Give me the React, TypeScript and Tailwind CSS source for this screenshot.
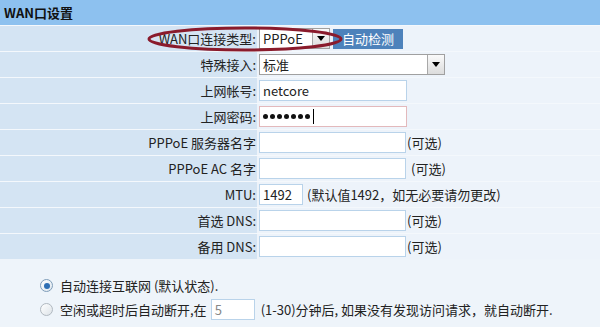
import React from "react";

const font = { fontFamily: '"Noto Sans CJK SC", "Noto Sans", sans-serif' };

function Arrow() {
  return (
    <span className="flex h-full w-[17px] items-center justify-center border-l border-[#a8a8a8] bg-gradient-to-b from-[#fafafa] to-[#dcdcdc]">
      <span className="h-0 w-0 border-x-[4px] border-t-[5px] border-x-transparent border-t-black" />
    </span>
  );
}

function Row({ label, children }: { label: string; children?: React.ReactNode }) {
  return (
    <div className="flex h-[26px] border-t border-[#f4f8fc]">
      <div className="flex w-[257px] items-center justify-end bg-[#d4e4f3] pr-[1px] text-[13px] text-[#222]">
        {label}
      </div>
      <div className="flex flex-1 items-center border-l border-[#eef3f9] bg-[#edf3fa] pl-[1px] text-[13px] text-[#222]">
        {children}
      </div>
    </div>
  );
}

function Input({ w, value, pink }: { w: string; value?: React.ReactNode; pink?: boolean }) {
  return (
    <div
      className={`flex h-[21px] items-center bg-white px-[3px] text-[13px] ${w} border ${
        pink ? "border-[#e3b9bc]" : "border-[#b9d3ea]"
      }`}
    >
      {value}
    </div>
  );
}

export default function App() {
  const dots = [0, 1, 2, 3, 4, 5, 6];
  return (
    <div className="relative h-[327px] w-[600px] overflow-hidden bg-[#eef4fa]" style={font}>
      <div className="flex h-[25px] items-center bg-[#8dc1ef] pl-[4px] text-[13px] font-bold text-[#111]">
        WAN口设置
      </div>

      <Row label="WAN口连接类型:">
        <div className="flex h-[21px] w-[71px] items-center justify-between border border-[#a0a0a0] bg-white pl-[3px]">
          <span>PPPoE</span>
          <Arrow />
        </div>
        <button className="ml-[3px] h-[20px] w-[70px] bg-[#4d82bb] text-[13px] text-white">自动检测</button>
      </Row>
      <Row label="特殊接入:">
        <div className="flex h-[21px] w-[186px] items-center justify-between border border-[#a0a0a0] bg-white pl-[3px]">
          <span>标准</span>
          <Arrow />
        </div>
      </Row>
      <Row label="上网帐号:">
        <Input w="w-[148px]" value="netcore" />
      </Row>
      <Row label="上网密码:">
        <Input
          w="w-[148px]"
          pink
          value={
            <span className="flex items-center gap-[2px]">
              {dots.map((d) => (
                <span key={d} className="h-[5px] w-[5px] rounded-full bg-[#111]" />
              ))}
              <span className="ml-[1px] h-[15px] w-px bg-black" />
            </span>
          }
        />
      </Row>
      <Row label="PPPoE 服务器名字">
        <Input w="w-[147px]" />
        <span className="ml-[1px]">(可选)</span>
      </Row>
      <Row label="PPPoE AC 名字">
        <Input w="w-[147px]" />
        <span className="ml-[5px]">(可选)</span>
      </Row>
      <Row label="MTU:">
        <Input w="w-[44px]" value="1492" />
        <span className="ml-[4px]">(默认值1492，如无必要请勿更改)</span>
      </Row>
      <Row label="首选 DNS:">
        <Input w="w-[147px]" />
        <span className="ml-[1px]">(可选)</span>
      </Row>
      <Row label="备用 DNS:">
        <Input w="w-[147px]" />
        <span className="ml-[1px]">(可选)</span>
      </Row>

      <div className="flex flex-col gap-[3px] pl-[40px] pt-[16px] text-[13px] text-[#222]">
        <label className="flex h-[21px] items-center">
          <span className="mr-[7px] flex h-[13px] w-[13px] items-center justify-center rounded-full border border-[#7f9db9] bg-gradient-to-br from-white to-[#dde6ee]">
            <span className="h-[6px] w-[6px] rounded-full bg-[#2f6fb4]" />
          </span>
          自动连接互联网 (默认状态).
        </label>
        <label className="flex h-[21px] items-center">
          <span className="mr-[7px] h-[13px] w-[13px] rounded-full border border-[#b0b8c0] bg-gradient-to-br from-white to-[#dde3e8]" />
          空闲或超时后自动断开,在
          <span className="ml-[4px] flex h-[21px] w-[44px] items-center border border-[#b9d3ea] bg-white px-[3px] text-[#888]">5</span>
          <span className="ml-[6px]">(1-30)分钟后, 如果没有发现访问请求，就自动断开.</span>
        </label>
        <label className="flex h-[21px] items-center">
          <span className="mr-[7px] h-[13px] w-[13px] rounded-full border border-[#b0b8c0] bg-gradient-to-br from-white to-[#dde3e8]" />
          手动连接，由用户手动进行连接.
        </label>
      </div>

      <svg className="pointer-events-none absolute left-[146px] top-[25px]" width="198" height="28" viewBox="0 0 198 28">
        <ellipse cx="99" cy="14" rx="96" ry="11" fill="none" stroke="#8a1b2c" strokeWidth="3" />
      </svg>
    </div>
  );
}
